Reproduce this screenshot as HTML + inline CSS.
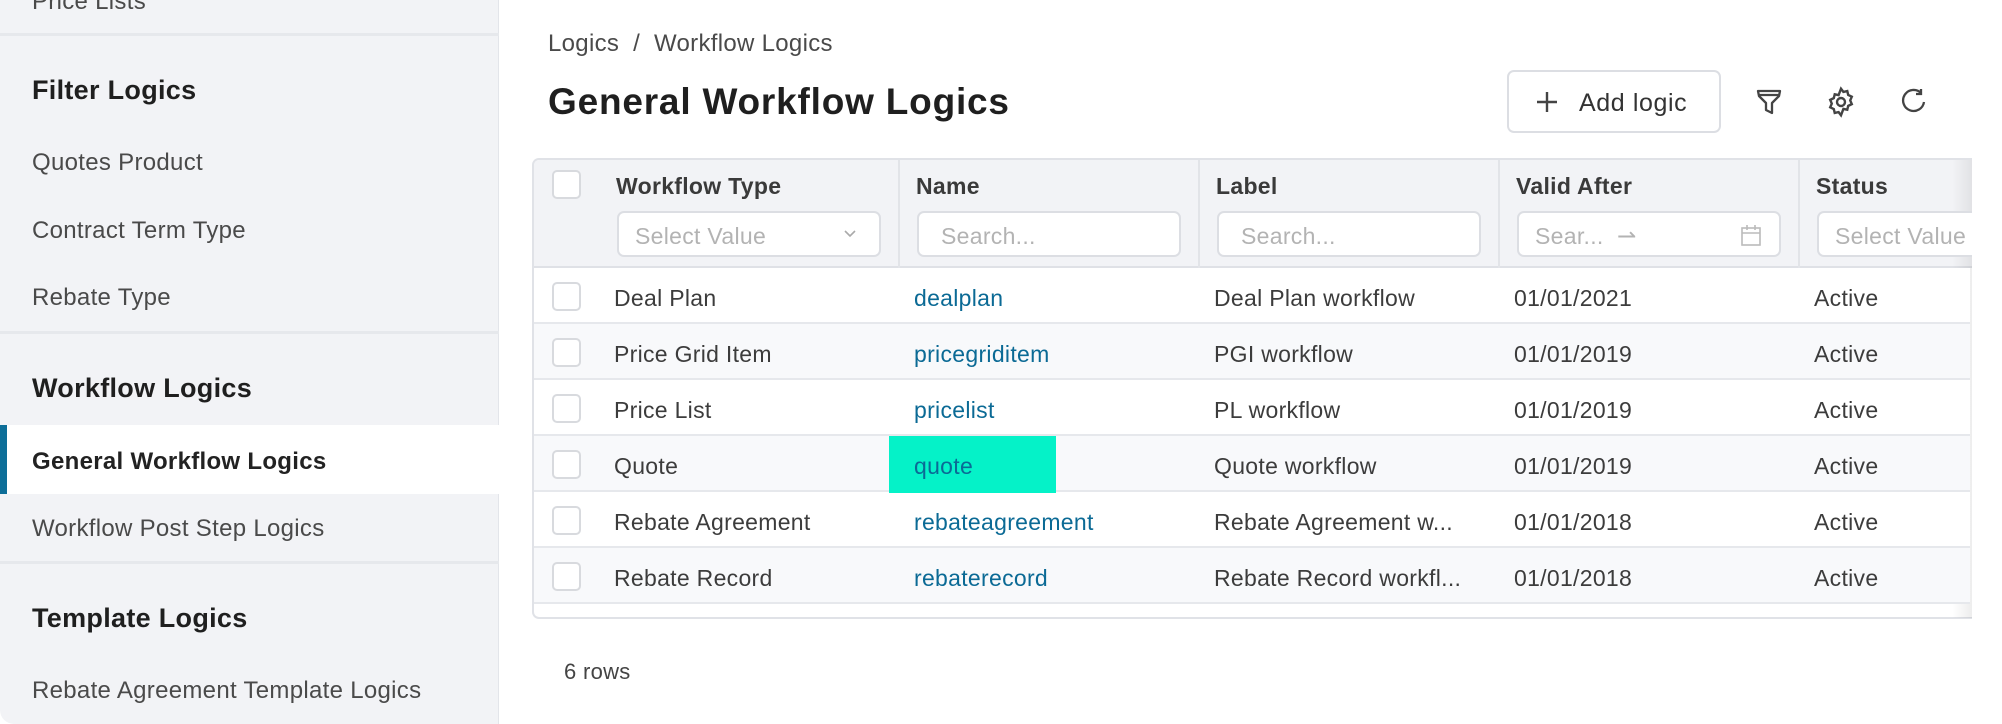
<!DOCTYPE html>
<html><head><meta charset="utf-8"><style>
*{box-sizing:border-box;margin:0;padding:0}
body{width:2002px;height:724px;overflow:hidden;background:#fff;font-family:"Liberation Sans",Arial,sans-serif;position:relative;color:#333;letter-spacing:0.3px}
.a{position:absolute;white-space:nowrap}
#side{position:absolute;left:0;top:0;width:499px;height:724px;background:#f2f3f6;border-right:1px solid #e3e5ea;border-bottom-left-radius:14px}
.hd{font-weight:bold;font-size:27px;color:#1f1f1f;left:32px}
.it{font-size:24px;color:#4a4a4a;left:32px}
.dv{position:absolute;left:0;width:499px;height:3px;background:#e6e8ec}
.th{font-weight:bold;font-size:23px;color:#3a3a3a}
.in{position:absolute;top:211px;height:46px;background:#fff;border:2px solid #dcdee3;border-radius:7px;font-size:23px;color:#b3b3b3;padding:10px 0 0 16px;overflow:hidden;white-space:nowrap}
.cb{position:absolute;left:552px;width:29px;height:29px;border:2px solid #d8dade;border-radius:5px;background:#fff}
.td{font-size:23px;color:#3c3c3c}
.lk{font-size:23px;color:#0b6a95}
.row{position:absolute;left:534px;width:1436px;height:56px;border-bottom:2px solid #e6e8ec}
.vd{position:absolute;top:160px;width:2px;height:108px;background:#e2e4e8}
</style></head><body>
<div id="side">
<div class="a it" style="top:-12px">Price Lists</div>
<div class="dv" style="top:33px"></div>
<div class="a hd" style="top:75px">Filter Logics</div>
<div class="a it" style="top:149px">Quotes Product</div>
<div class="a it" style="top:217px">Contract Term Type</div>
<div class="a it" style="top:284px">Rebate Type</div>
<div class="dv" style="top:331px"></div>
<div class="a hd" style="top:373px">Workflow Logics</div>
<div style="position:absolute;left:0;top:425px;width:499px;height:69px;background:#fff"></div>
<div style="position:absolute;left:0;top:425px;width:7px;height:69px;background:#0d6e98"></div>
<div class="a it" style="top:448px;font-weight:bold;color:#222">General Workflow Logics</div>
<div class="a it" style="top:515px">Workflow Post Step Logics</div>
<div class="dv" style="top:561px"></div>
<div class="a hd" style="top:603px">Template Logics</div>
<div class="a it" style="top:677px">Rebate Agreement Template Logics</div>
</div>

<div class="a" style="left:548px;top:30px;font-size:24px;color:#4a4a4a">Logics &nbsp;/ &nbsp;Workflow Logics</div>
<div class="a" style="left:548px;top:81px;font-size:37px;font-weight:bold;color:#1f1f1f;letter-spacing:0.8px">General Workflow Logics</div>

<div class="a" style="left:1507px;top:70px;width:214px;height:63px;border:2px solid #dcdee3;border-radius:7px;background:#fff"></div>
<svg class="a" style="left:1534px;top:89px" width="26" height="26" viewBox="0 0 26 26"><path d="M13 3v20M3 13h20" stroke="#444" stroke-width="2.4"/></svg>
<div class="a" style="left:1579px;top:89px;font-size:25px;color:#333;letter-spacing:0.6px">Add logic</div>
<svg class="a" style="left:1754px;top:87px" width="30" height="30" viewBox="0 0 30 30" fill="none" stroke="#444" stroke-width="2.3" stroke-linejoin="round"><path d="M4 4h22l-1 5-7 7v10l-6-3v-7L5 9z"/><path d="M5 8h20"/></svg>
<svg class="a" style="left:1825px;top:86px" width="32" height="32" viewBox="0 0 24 24" fill="none" stroke="#444" stroke-width="1.8"><circle cx="12" cy="12" r="3"/><path d="M12 2l1.8 2.4 2.9-.6.7 2.9 2.7 1.3-1.2 2.8 1.2 2.8-2.7 1.3-.7 2.9-2.9-.6L12 22l-1.8-2.4-2.9.6-.7-2.9-2.7-1.3 1.2-2.8-1.2-2.8 2.7-1.3.7-2.9 2.9.6z"/></svg>
<svg class="a" style="left:1899px;top:87px" width="30" height="30" viewBox="0 0 30 30" fill="none" stroke="#444" stroke-width="2.3"><path d="M22 6A10.5 10.5 0 1 0 25 15"/><path d="M22 2v5h-5" /></svg>

<div class="a" style="left:532px;top:158px;width:1440px;height:461px;border:2px solid #e0e2e7;border-right:none;border-radius:7px 0 0 7px;overflow:hidden;background:#fff">
<div style="position:absolute;left:0;top:0;width:1440px;height:108px;background:#f2f3f6;border-bottom:2px solid #dfe1e6"></div>
</div>
<div style="position:absolute;left:1952px;top:160px;width:20px;height:458px;background:linear-gradient(to right,rgba(0,0,0,0),rgba(0,0,0,0.07))"></div>
<div class="vd" style="left:898px"></div><div class="vd" style="left:1198px"></div><div class="vd" style="left:1498px"></div><div class="vd" style="left:1798px"></div>
<div class="cb" style="top:170px"></div>
<div class="a th" style="left:616px;top:173px">Workflow Type</div>
<div class="a th" style="left:916px;top:173px">Name</div>
<div class="a th" style="left:1216px;top:173px">Label</div>
<div class="a th" style="left:1516px;top:173px">Valid After</div>
<div class="a th" style="left:1816px;top:173px">Status</div>
<div class="in" style="left:617px;width:264px">Select Value<svg style="position:absolute;right:22px;top:16px" width="14" height="10" viewBox="0 0 14 10"><path d="M2 2l5 5 5-5" stroke="#aaa" stroke-width="1.6" fill="none"/></svg></div>
<div class="in" style="left:917px;width:264px;padding-left:22px">Search...</div>
<div class="in" style="left:1217px;width:264px;padding-left:22px">Search...</div>
<div class="in" style="left:1517px;width:264px">Sear... &nbsp;⇀<svg style="position:absolute;right:16px;top:10px" width="24" height="24" viewBox="0 0 24 24" fill="none" stroke="#bbb" stroke-width="1.6"><rect x="3" y="5" width="18" height="17"/><path d="M3 10h18M8 2v5M16 2v5"/></svg></div>
<div class="in" style="left:1817px;width:155px;border-right:none;border-radius:7px 0 0 7px">Select Value</div>

<div class="row" style="top:268px;background:#fff"></div>
<div class="row" style="top:324px;background:#f8f9fb"></div>
<div class="row" style="top:380px;background:#fff"></div>
<div class="row" style="top:436px;background:#f8f9fb"></div>
<div class="row" style="top:492px;background:#fff"></div>
<div class="row" style="top:548px;background:#f8f9fb"></div>
<div style="position:absolute;left:889px;top:436px;width:167px;height:57px;background:#05f2c8"></div>

<div class="cb" style="top:282px"></div><div class="cb" style="top:338px"></div><div class="cb" style="top:394px"></div><div class="cb" style="top:450px"></div><div class="cb" style="top:506px"></div><div class="cb" style="top:562px"></div>

<div class="a td" style="left:614px;top:285px">Deal Plan</div>
<div class="a lk" style="left:914px;top:285px">dealplan</div>
<div class="a td" style="left:1214px;top:285px">Deal Plan workflow</div>
<div class="a td" style="left:1514px;top:285px">01/01/2021</div>
<div class="a td" style="left:1814px;top:285px">Active</div>

<div class="a td" style="left:614px;top:341px">Price Grid Item</div>
<div class="a lk" style="left:914px;top:341px">pricegriditem</div>
<div class="a td" style="left:1214px;top:341px">PGI workflow</div>
<div class="a td" style="left:1514px;top:341px">01/01/2019</div>
<div class="a td" style="left:1814px;top:341px">Active</div>

<div class="a td" style="left:614px;top:397px">Price List</div>
<div class="a lk" style="left:914px;top:397px">pricelist</div>
<div class="a td" style="left:1214px;top:397px">PL workflow</div>
<div class="a td" style="left:1514px;top:397px">01/01/2019</div>
<div class="a td" style="left:1814px;top:397px">Active</div>

<div class="a td" style="left:614px;top:453px">Quote</div>
<div class="a lk" style="left:914px;top:453px">quote</div>
<div class="a td" style="left:1214px;top:453px">Quote workflow</div>
<div class="a td" style="left:1514px;top:453px">01/01/2019</div>
<div class="a td" style="left:1814px;top:453px">Active</div>

<div class="a td" style="left:614px;top:509px">Rebate Agreement</div>
<div class="a lk" style="left:914px;top:509px">rebateagreement</div>
<div class="a td" style="left:1214px;top:509px">Rebate Agreement w...</div>
<div class="a td" style="left:1514px;top:509px">01/01/2018</div>
<div class="a td" style="left:1814px;top:509px">Active</div>

<div class="a td" style="left:614px;top:565px">Rebate Record</div>
<div class="a lk" style="left:914px;top:565px">rebaterecord</div>
<div class="a td" style="left:1214px;top:565px">Rebate Record workfl...</div>
<div class="a td" style="left:1514px;top:565px">01/01/2018</div>
<div class="a td" style="left:1814px;top:565px">Active</div>

<div class="a" style="left:564px;top:659px;font-size:22px;color:#444">6 rows</div>
</body></html>
